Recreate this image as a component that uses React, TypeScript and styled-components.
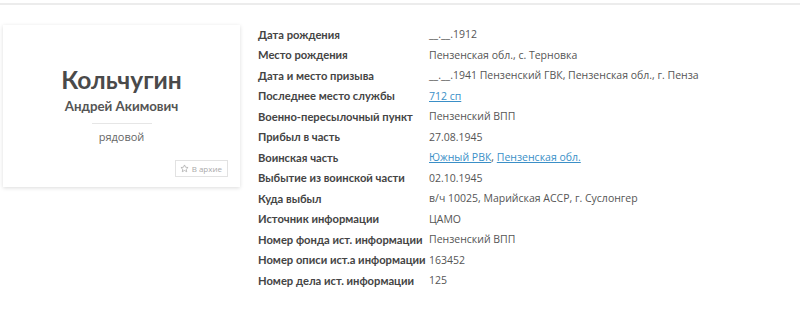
import React from "react";
import styled, { createGlobalStyle } from "styled-components";

const Global = createGlobalStyle`
  html, body { margin: 0; padding: 0; background: #fff; }
  body { font-family: "Open Sans", "Noto Sans", sans-serif; color: #555; }
`;

const Page = styled.div`
  border-top: 2px solid #ececec;
  margin-top: 3px;
  padding: 20px 0 0 3px;
  display: flex;
  align-items: flex-start;
  gap: 18px;
`;

const Card = styled.div`
  width: 237px;
  height: 162px;
  box-sizing: border-box;
  box-shadow: 0 1px 4px rgba(0, 0, 0, 0.14);
  display: flex;
  flex-direction: column;
  align-items: center;
  padding-top: 41px;
  position: relative;
`;

const Surname = styled.div`
  font-family: Lato, "Open Sans", sans-serif;
  font-size: 24.5px;
  font-weight: 700;
  color: #4a4a4a;
  line-height: 28px;
`;

const Given = styled.div`
  font-family: Lato, "Open Sans", sans-serif;
  font-size: 13.3px;
  font-weight: 700;
  color: #555;
  line-height: 18px;
  margin-top: 3px;
`;

const Divider = styled.div`
  width: 60px;
  height: 1px;
  background: #e6e6e6;
  margin-top: 8px;
`;

const Rank = styled.div`
  font-size: 11px;
  color: #666;
  margin-top: 6px;
  line-height: 14px;
`;

const ArchiveButton = styled.button`
  position: absolute;
  right: 12px;
  bottom: 10px;
  height: 17px;
  padding: 0 5px 0 4px;
  border: 1px solid #e2e2e2;
  background: #fff;
  display: flex;
  align-items: center;
  gap: 3px;
  font-family: inherit;
  font-size: 8px;
  color: #aaa;
`;

const Table = styled.div`
  display: grid;
  grid-template-columns: 171px auto;
  grid-auto-rows: 20.5px;
  align-items: center;
  margin-top: -1px;
`;

const Label = styled.div`
  font-family: Lato, "Open Sans", sans-serif;
  font-size: 11.2px;
  font-weight: 700;
  color: #444;
  white-space: nowrap;
`;

const Value = styled.div`
  font-size: 10.5px;
  color: #555;
  white-space: nowrap;
`;

const Link = styled.a`
  color: #3a8fc7;
  text-decoration: underline;
`;

const Star = () => (
  <svg width="9" height="9" viewBox="0 0 24 24" fill="none" stroke="#aaa" strokeWidth="2" strokeLinejoin="round">
    <path d="M12 2.5l2.9 6.1 6.6.8-4.9 4.6 1.3 6.6L12 17.3 6.1 20.6l1.3-6.6-4.9-4.6 6.6-.8z" />
  </svg>
);

type Row = { label: string; value: React.ReactNode };

const rows: Row[] = [
  { label: "Дата рождения", value: "__.__.1912" },
  { label: "Место рождения", value: "Пензенская обл., с. Терновка" },
  { label: "Дата и место призыва", value: "__.__.1941 Пензенский ГВК, Пензенская обл., г. Пенза" },
  { label: "Последнее место службы", value: <Link href="#">712 сп</Link> },
  { label: "Военно-пересылочный пункт", value: "Пензенский ВПП" },
  { label: "Прибыл в часть", value: "27.08.1945" },
  {
    label: "Воинская часть",
    value: (
      <>
        <Link href="#">Южный РВК</Link>, <Link href="#">Пензенская обл.</Link>
      </>
    ),
  },
  { label: "Выбытие из воинской части", value: "02.10.1945" },
  { label: "Куда выбыл", value: "в/ч 10025, Марийская АССР, г. Суслонгер" },
  { label: "Источник информации", value: "ЦАМО" },
  { label: "Номер фонда ист. информации", value: "Пензенский ВПП" },
  { label: "Номер описи ист.а информации", value: "163452" },
  { label: "Номер дела ист. информации", value: "125" },
];

export default function App() {
  return (
    <>
      <Global />
      <Page>
        <Card>
          <Surname>Кольчугин</Surname>
          <Given>Андрей Акимович</Given>
          <Divider />
          <Rank>рядовой</Rank>
          <ArchiveButton>
            <Star />В архие
          </ArchiveButton>
        </Card>
        <Table>
          {rows.map((r) => (
            <React.Fragment key={r.label}>
              <Label>{r.label}</Label>
              <Value>{r.value}</Value>
            </React.Fragment>
          ))}
        </Table>
      </Page>
    </>
  );
}
